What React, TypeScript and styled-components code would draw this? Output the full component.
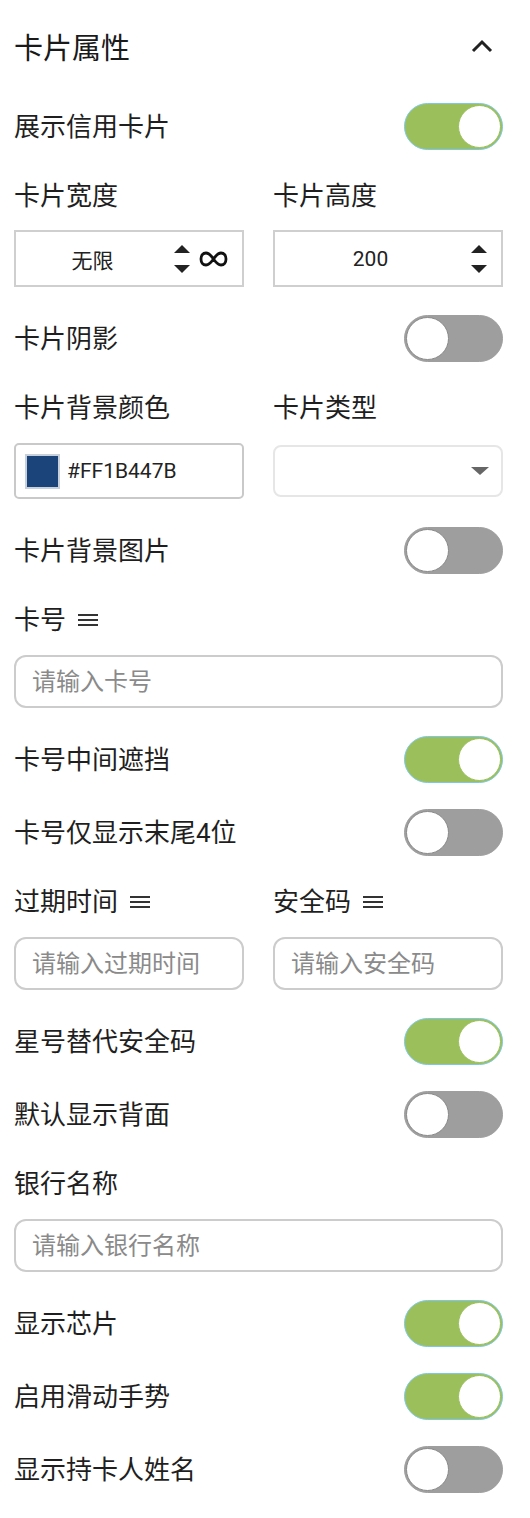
import React, { useState } from "react";
import styled, { createGlobalStyle } from "styled-components";

const GlobalStyle = createGlobalStyle`
  body {
    margin: 0;
    background: #ffffff;
    font-family: Roboto, "Noto Sans CJK SC", "Noto Sans", sans-serif;
    color: #222222;
  }
`;

type ToggleKey =
  | "showCard"
  | "shadow"
  | "bgImage"
  | "maskMiddle"
  | "lastFour"
  | "starCvv"
  | "showBack"
  | "showChip"
  | "swipe"
  | "holderName";

const App: React.FC = () => {
  const [toggles, setToggles] = useState<Record<ToggleKey, boolean>>({
    showCard: true,
    shadow: false,
    bgImage: false,
    maskMiddle: true,
    lastFour: false,
    starCvv: true,
    showBack: false,
    showChip: true,
    swipe: true,
    holderName: false,
  });
  const [height, setHeight] = useState<number>(200);

  const flip = (key: ToggleKey) => {
    setToggles((prev) => ({ ...prev, [key]: !prev[key] }));
  };

  const switchRow = (label: string, key: ToggleKey) => (
    <SwitchRow>
      <RowLabel>{label}</RowLabel>
      <Switch $on={toggles[key]} onClick={() => flip(key)}>
        <Knob $on={toggles[key]} />
      </Switch>
    </SwitchRow>
  );

  return (
    <Panel>
      <GlobalStyle />
      <Header>
        <Title>卡片属性</Title>
        <svg width="22" height="14" viewBox="0 0 22 14">
          <path d="M2 12 L11 3 L20 12" fill="none" stroke="#222" strokeWidth="3" />
        </svg>
      </Header>

      {switchRow("展示信用卡片", "showCard")}

      <FieldGroup>
        <TwoCols>
          <RowLabel>卡片宽度</RowLabel>
          <RowLabel>卡片高度</RowLabel>
        </TwoCols>
        <TwoCols>
          <NumberBox>
            <NumberValue>无限</NumberValue>
            <Spinner />
            <svg width="29" height="16" viewBox="0 0 29 16">
              <path
                d="M14.5 8 C11 3 9.5 2 7 2 C3.8 2 2 4.6 2 8 C2 11.4 3.8 14 7 14 C9.5 14 11 13 14.5 8 C18 3 19.5 2 22 2 C25.2 2 27 4.6 27 8 C27 11.4 25.2 14 22 14 C19.5 14 18 13 14.5 8 Z"
                fill="none"
                stroke="#111"
                strokeWidth="2.8"
              />
            </svg>
          </NumberBox>
          <NumberBox>
            <NumberValue>{height}</NumberValue>
            <Spinner onUp={() => setHeight(height + 1)} onDown={() => setHeight(height - 1)} />
          </NumberBox>
        </TwoCols>
      </FieldGroup>

      {switchRow("卡片阴影", "shadow")}

      <FieldGroup>
        <TwoCols>
          <RowLabel>卡片背景颜色</RowLabel>
          <RowLabel>卡片类型</RowLabel>
        </TwoCols>
        <TwoCols>
          <ColorBox>
            <Swatch $color="#1B447B" />
            <ColorText>#FF1B447B</ColorText>
          </ColorBox>
          <SelectBox>
            <svg width="18" height="8" viewBox="0 0 18 8">
              <path d="M0 0 L18 0 L9 8 Z" fill="#666" />
            </svg>
          </SelectBox>
        </TwoCols>
      </FieldGroup>

      {switchRow("卡片背景图片", "bgImage")}

      <FieldGroup>
        <RowLabel>
          卡号
          <MenuIcon />
        </RowLabel>
        <TextInput placeholder="请输入卡号" />
      </FieldGroup>

      {switchRow("卡号中间遮挡", "maskMiddle")}
      {switchRow("卡号仅显示末尾4位", "lastFour")}

      <FieldGroup>
        <TwoCols>
          <RowLabel>
            过期时间
            <MenuIcon />
          </RowLabel>
          <RowLabel>
            安全码
            <MenuIcon />
          </RowLabel>
        </TwoCols>
        <TwoCols>
          <TextInput placeholder="请输入过期时间" />
          <TextInput placeholder="请输入安全码" />
        </TwoCols>
      </FieldGroup>

      {switchRow("星号替代安全码", "starCvv")}
      {switchRow("默认显示背面", "showBack")}

      <FieldGroup>
        <RowLabel>银行名称</RowLabel>
        <TextInput placeholder="请输入银行名称" />
      </FieldGroup>

      {switchRow("显示芯片", "showChip")}
      {switchRow("启用滑动手势", "swipe")}
      {switchRow("显示持卡人姓名", "holderName")}
    </Panel>
  );
};

export default App;

const Spinner: React.FC<{ onUp?: () => void; onDown?: () => void }> = ({ onUp, onDown }) => (
  <SpinnerWrap>
    <svg width="16" height="8" viewBox="0 0 16 8" onClick={onUp}>
      <path d="M0 8 L8 0 L16 8 Z" fill="#222" />
    </svg>
    <svg width="16" height="8" viewBox="0 0 16 8" onClick={onDown}>
      <path d="M0 0 L16 0 L8 8 Z" fill="#222" />
    </svg>
  </SpinnerWrap>
);

const MenuIcon: React.FC = () => (
  <MenuSvg width="20" height="14" viewBox="0 0 20 14">
    <rect x="0" y="1" width="20" height="2" fill="#333" />
    <rect x="0" y="6" width="20" height="2" fill="#333" />
    <rect x="0" y="11" width="20" height="2" fill="#333" />
  </MenuSvg>
);

const Panel = styled.div`
  width: 530px;
  box-sizing: border-box;
  padding: 0 27px 10px 14px;
`;

const Header = styled.div`
  height: 90px;
  display: flex;
  align-items: center;
  justify-content: space-between;
  padding-right: 10px;
  padding-top: 2px;
  box-sizing: border-box;
`;

const Title = styled.h1`
  margin: 0;
  font-size: 29px;
  font-weight: 400;
  color: #1a1a1a;
`;

const SwitchRow = styled.div`
  height: 73px;
  display: flex;
  align-items: center;
  justify-content: space-between;
`;

const RowLabel = styled.div`
  font-size: 26px;
  line-height: 34px;
  color: #1f1f1f;
  display: flex;
  align-items: center;
  gap: 12px;
`;

const Switch = styled.div<{ $on: boolean }>`
  width: 99px;
  height: 47px;
  box-sizing: border-box;
  border-radius: 24px;
  background: ${(p) => (p.$on ? "#9bc05b" : "#9e9e9e")};
  border: 1.5px solid ${(p) => (p.$on ? "#7cc7ea" : "#9e9e9e")};
  display: flex;
  align-items: center;
  justify-content: ${(p) => (p.$on ? "flex-end" : "flex-start")};
  padding: 0 1px;
  cursor: pointer;
`;

const Knob = styled.div<{ $on: boolean }>`
  width: 43px;
  height: 43px;
  border-radius: 50%;
  background: #ffffff;
  box-sizing: border-box;
  border: 1px solid ${(p) => (p.$on ? "#9bc05b" : "#8a8a8a")};
`;

const FieldGroup = styled.div`
  padding: 16px 0 15px;
  display: flex;
  flex-direction: column;
  gap: 18px;
`;

const TwoCols = styled.div`
  display: grid;
  grid-template-columns: 230px 230px;
  column-gap: 29px;
  align-items: center;
`;

const NumberBox = styled.div`
  height: 57px;
  margin-top: -1px;
  box-sizing: border-box;
  border: 2px solid #cfcfcf;
  display: flex;
  align-items: center;
  padding: 0 14px 0 4px;
  gap: 9px;
`;

const NumberValue = styled.div`
  flex: 1;
  text-align: center;
  font-size: 21px;
  color: #222;
`;

const SpinnerWrap = styled.div`
  display: flex;
  flex-direction: column;
  gap: 12px;
  svg {
    display: block;
    cursor: pointer;
  }
`;

const ColorBox = styled.div`
  height: 56px;
  box-sizing: border-box;
  border: 2px solid #c9c9c9;
  border-radius: 5px;
  display: flex;
  align-items: center;
  padding-left: 9px;
  gap: 7px;
`;

const Swatch = styled.div<{ $color: string }>`
  width: 35px;
  height: 35px;
  box-sizing: border-box;
  background: ${(p) => p.$color};
  border: 2px solid #c8d0dc;
`;

const ColorText = styled.span`
  font-size: 21px;
  color: #222;
`;

const SelectBox = styled.div`
  height: 52px;
  box-sizing: border-box;
  border: 2px solid #e6e6e6;
  border-radius: 8px;
  display: flex;
  align-items: center;
  justify-content: flex-end;
  padding-right: 12px;
`;

const TextInput = styled.input`
  height: 53px;
  width: 100%;
  box-sizing: border-box;
  border: 2px solid #cccccc;
  border-radius: 12px;
  padding: 0 16px;
  font-family: Roboto, "Noto Sans CJK SC", sans-serif;
  font-size: 24px;
  color: #222;
  outline: none;

  &::placeholder {
    color: #8a8a8a;
  }
`;

const MenuSvg = styled.svg`
  display: block;
`;
